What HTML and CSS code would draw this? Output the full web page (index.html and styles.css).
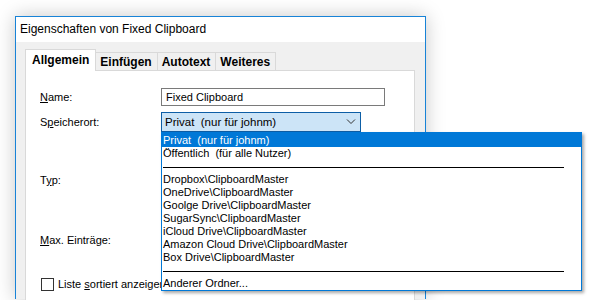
FILE: index.html
```html
<!DOCTYPE html>
<html lang="de">
<head>
    <meta charset="UTF-8">
    <title>Eigenschaften von Fixed Clipboard</title>
    <link rel="stylesheet" href="styles.css">
</head>
<body>
    <div class="window">
        <div class="titlebar">Eigenschaften von Fixed Clipboard</div>
        <div class="dialog">
            <ul class="tabs">
                <li class="tab active">Allgemein</li>
                <li class="tab">Einfügen</li>
                <li class="tab">Autotext</li>
                <li class="tab">Weiteres</li>
            </ul>
            <div class="panel">
                <div class="row row-name">
                    <label class="label"><u>N</u>ame:</label>
                    <div class="textbox">Fixed Clipboard</div>
                </div>
                <div class="row row-ort">
                    <label class="label">S<u>p</u>eicherort:</label>
                    <div class="combo-wrap">
                        <div class="combo">
                            <span>Privat&nbsp; (nur für johnm)</span>
                            <svg class="chevron" width="10" height="6" viewBox="0 0 10 6">
                                <polyline points="1,0.5 5,4.5 9,0.5" fill="none" stroke="#333" stroke-width="1"/>
                            </svg>
                        </div>
                        <ul class="dropdown">
                            <li class="item selected">Privat&nbsp; (nur für johnm)</li>
                            <li class="item">Öffentlich&nbsp; (für alle Nutzer)</li>
                            <li class="sep"></li>
                            <li class="item">Dropbox\ClipboardMaster</li>
                            <li class="item">OneDrive\ClipboardMaster</li>
                            <li class="item">Goolge Drive\ClipboardMaster</li>
                            <li class="item">SugarSync\ClipboardMaster</li>
                            <li class="item">iCloud Drive\ClipboardMaster</li>
                            <li class="item">Amazon Cloud Drive\ClipboardMaster</li>
                            <li class="item">Box Drive\ClipboardMaster</li>
                            <li class="sep"></li>
                            <li class="item">Anderer Ordner...</li>
                        </ul>
                    </div>
                </div>
                <div class="row row-typ">
                    <label class="label">T<u>y</u>p:</label>
                </div>
                <div class="row row-max">
                    <label class="label"><u>M</u>ax. Einträge:</label>
                </div>
                <div class="row row-check">
                    <span class="checkbox"></span>
                    <label>Liste <u>s</u>ortiert anzeigen</label>
                </div>
            </div>
        </div>
    </div>
</body>
</html>
```

FILE: styles.css
```css
body {
    margin: 0;
    padding: 0;
    height: 300px;
    overflow: hidden;
    background-color: #fff;
    font-family: "Liberation Sans", Arial, sans-serif;
    font-size: 11px;
    color: #000;
}

.window {
    margin: 16px 0 0 15px;
    width: 409px;
    height: 282px;
    border: 1px solid #1883d7;
    border-bottom: none;
    background-color: #f0f0f0;
    box-shadow: 0 0 18px rgba(0, 0, 0, 0.22);
}

.titlebar {
    height: 25px;
    line-height: 24px;
    padding-left: 4px;
    background-color: #fff;
    font-size: 12px;
}

.dialog {
    padding: 8px 10px 0 9px;
}

.tabs {
    list-style: none;
    margin: 0;
    padding: 0;
    display: flex;
    align-items: flex-end;
    height: 20px;
}

.tab {
    height: 17px;
    line-height: 18px;
    padding: 0 5px 0 4px;
    border: 1px solid #d9d9d9;
    border-bottom: none;
    margin-left: -1px;
    font-weight: bold;
    font-size: 12px;
}

.tab.active {
    height: 21px;
    line-height: 20px;
    margin-left: 0;
    margin-bottom: -1px;
    padding: 0 6px;
    background-color: #fff;
    position: relative;
    z-index: 1;
}

.panel {
    height: 240px;
    border: 1px solid #d9d9d9;
    background-color: #fff;
    padding: 0 0 0 14px;
}

.row {
    display: flex;
    align-items: center;
}

.label {
    width: 121px;
    flex-shrink: 0;
}

.row-name {
    margin-top: 17px;
    height: 18px;
}

.textbox {
    width: 218px;
    height: 16px;
    line-height: 16px;
    padding-left: 4px;
    border: 1px solid #7a7a7a;
}

.row-ort {
    margin-top: 6px;
    height: 20px;
}

.combo-wrap {
    position: relative;
}

.combo {
    width: 195px;
    height: 18px;
    padding-left: 3px;
    border: 1px solid #0d5ea6;
    background-color: #cce4f7;
    display: flex;
    align-items: center;
    justify-content: space-between;
    font-size: 11.5px;
}

.chevron {
    margin-right: 4px;
}

.dropdown {
    position: absolute;
    top: 20px;
    left: 0;
    z-index: 5;
    list-style: none;
    margin: 0;
    padding: 0;
    width: 419px;
    height: 157px;
    border: 1px solid #0078d7;
    background-color: #fff;
    box-shadow: 2px 2px 3px rgba(0, 0, 0, 0.35);
}

.item {
    height: 13px;
    line-height: 13px;
    padding-left: 1px;
    white-space: nowrap;
}

.item.selected {
    height: 14px;
    line-height: 14px;
    background-color: #0078d7;
    color: #fff;
    margin-right: -1px;
}

.sep {
    height: 13px;
    margin: 0 17px 0 1px;
    background: linear-gradient(#000, #000) no-repeat 0 7px / 100% 1px;
}

.row-typ {
    margin-top: 41px;
    height: 14px;
}

.row-max {
    margin-top: 46px;
    height: 14px;
}

.row-check {
    margin-top: 30px;
    height: 14px;
}

.checkbox {
    width: 11px;
    height: 11px;
    border: 1px solid #333;
    margin: 0 4px 0 1px;
}
```
